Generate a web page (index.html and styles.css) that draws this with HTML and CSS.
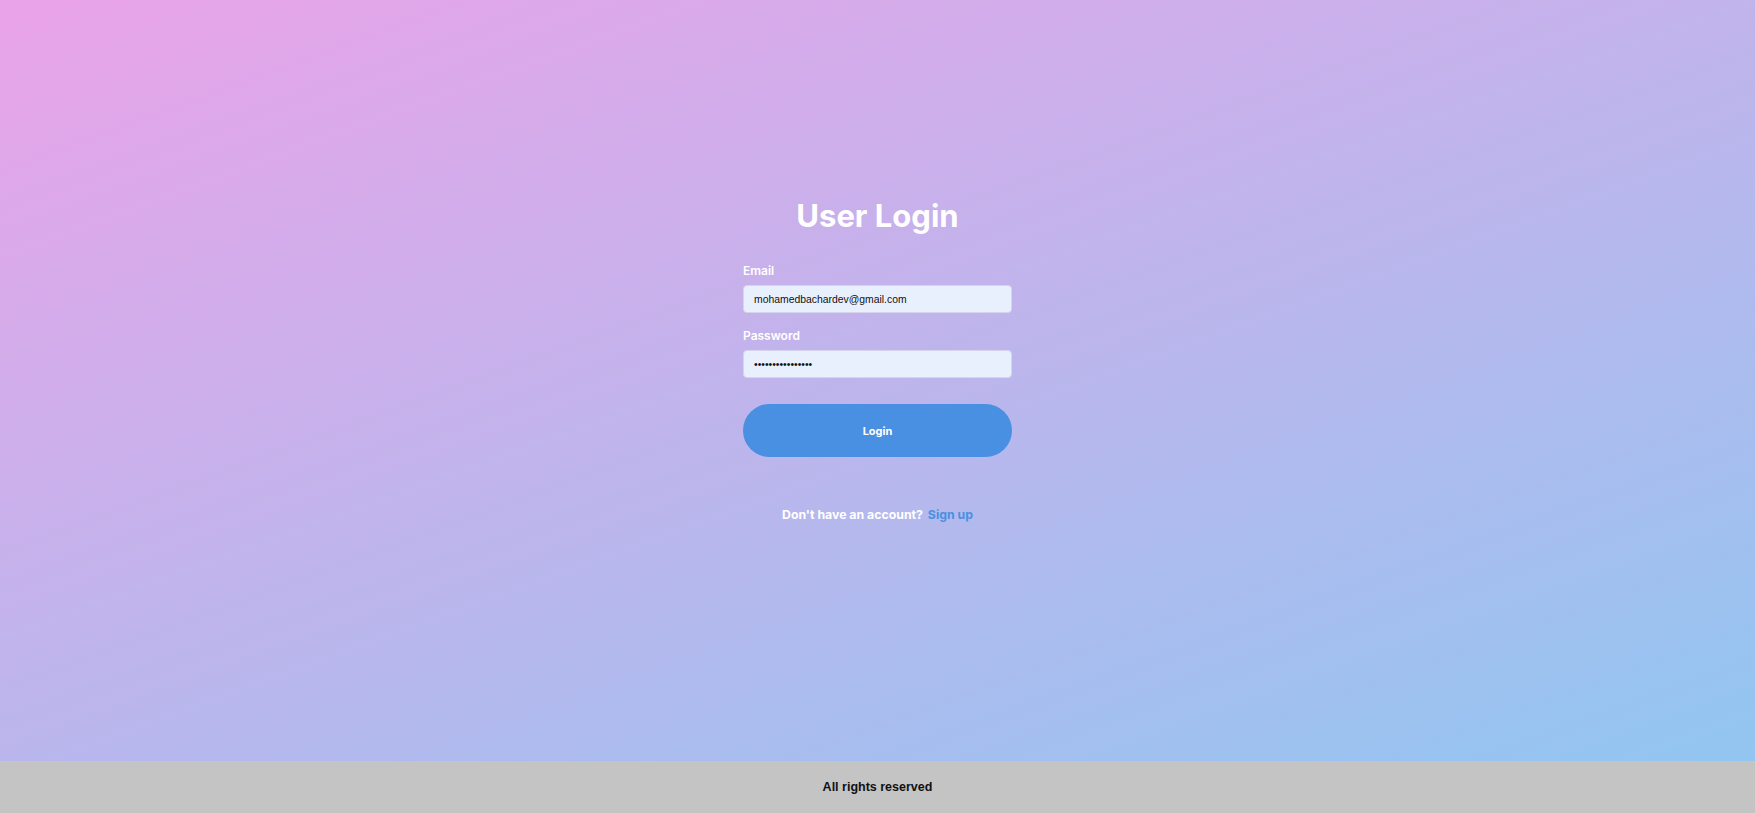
FILE: index.html
```html
<!DOCTYPE html>
<html lang="en">
<head>
<meta charset="utf-8">
<title>User Login</title>
<link rel="stylesheet" href="styles.css">
</head>
<body>
<main class="page">
  <form class="login">
    <h1 class="title">User Login</h1>
    <div class="field">
      <label class="label" for="email">Email</label>
      <input class="input" id="email" type="email" value="mohamedbachardev@gmail.com">
    </div>
    <div class="field">
      <label class="label" for="password">Password</label>
      <input class="input" id="password" type="password" value="mohamedbachar123">
    </div>
    <button class="btn" type="button">Login</button>
    <p class="signup">Don't have an account? <a class="signup-link" href="#">Sign up</a></p>
  </form>
</main>
<footer class="footer">All rights reserved</footer>
</body>
</html>
```
FILE: styles.css
```css
* { box-sizing: border-box; }
html, body { margin: 0; height: 100%; }
body {
  display: flex;
  flex-direction: column;
  font-family: Inter, "Liberation Sans", sans-serif;
}
.page {
  flex: 1;
  display: flex;
  justify-content: center;
  background: linear-gradient(160deg, #eaa3e8 0%, #c2b3ec 45%, #92c6f1 100%);
}
.login {
  width: 269px;
  margin-top: 196px;
  display: flex;
  flex-direction: column;
}
.title {
  margin: 0 0 27px;
  text-align: center;
  color: #fff;
  font-size: 31px;
  font-weight: 700;
  line-height: 40px;
}
.field {
  display: flex;
  flex-direction: column;
  margin-bottom: 15px;
}
.label {
  color: #fff;
  font-size: 12px;
  font-weight: 600;
  line-height: 16px;
  margin-bottom: 6px;
}
.input {
  height: 28px;
  border: 1px solid #d6d3ec;
  border-radius: 4px;
  background: #e8f0fe;
  padding: 0 10px;
  font-family: "Liberation Sans", Arial, sans-serif;
  font-size: 10.4px;
  color: #111;
}
.btn {
  margin-top: 11px;
  height: 53px;
  border: none;
  border-radius: 27px;
  background: #4a90e2;
  color: #fff;
  font-family: Inter, sans-serif;
  font-size: 11px;
  font-weight: 700;
}
.signup {
  margin: 50px 0 0;
  text-align: center;
  color: #fff;
  font-size: 12.3px;
  font-weight: 700;
}
.signup-link {
  color: #4a90e2;
  text-decoration: none;
  margin-left: 2px;
}
.footer {
  height: 52px;
  flex: none;
  background: #c4c4c4;
  display: flex;
  align-items: center;
  justify-content: center;
  font-family: "Liberation Sans", Arial, sans-serif;
  font-size: 12.5px;
  font-weight: 700;
  color: #111;
}
```
